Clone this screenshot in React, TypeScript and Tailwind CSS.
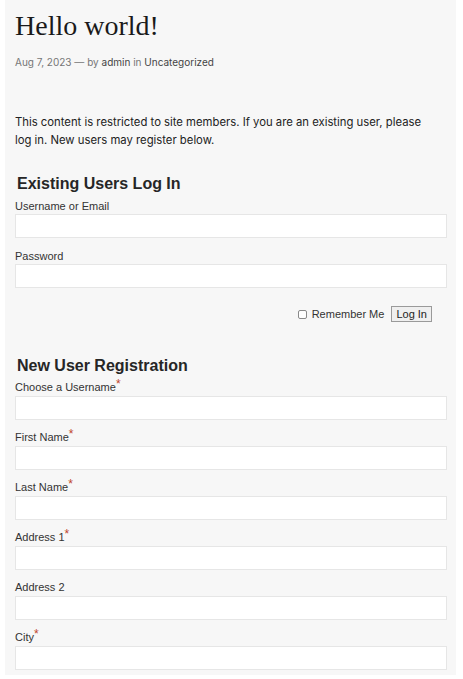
export default function App() {
  const fields: { label: string; required: boolean }[] = [
    { label: 'Choose a Username', required: true },
    { label: 'First Name', required: true },
    { label: 'Last Name', required: true },
    { label: 'Address 1', required: true },
    { label: 'Address 2', required: false },
    { label: 'City', required: true },
  ]

  return (
    <div className="min-h-screen bg-white">
      {/* Post panel */}
      <div className="mx-[5px] w-[451px] bg-[#f7f7f7] pl-[10px] pr-[9px] pb-[5px]">
        <h1
          className="pt-[9px] text-[28px] leading-[34px] text-[#1a1a1a]"
          style={{ fontFamily: '"Liberation Serif", serif' }}
        >
          Hello world!
        </h1>
        <p
          className="mt-[12px] text-[10px] leading-[14px] text-[#767676]"
          style={{ fontFamily: 'Inter, sans-serif' }}
        >
          Aug 7, 2023 — by <span className="text-[#444]">admin</span> in{' '}
          <span className="text-[#444]">Uncategorized</span>
        </p>

        <p
          className="mt-[44px] max-w-[416px] text-[11.3px] leading-[18px] text-[#222]"
          style={{ fontFamily: 'Inter, sans-serif' }}
        >
          This content is restricted to site members. If you are an existing user, please log in. New users may register
          below.
        </p>

        <div style={{ fontFamily: '"Liberation Sans", Arial, sans-serif' }}>
          {/* Login */}
          <h2 className="mt-[25px] pl-[2px] text-[16px] font-bold leading-[20px] text-[#262626]">
            Existing Users Log In
          </h2>
          <div className="mt-[5px] flex flex-col gap-[11px]">
            <div>
              <label className="mb-[1px] block text-[11px] leading-[14px] text-[#333]">Username or Email</label>
              <input className="block h-[24px] w-full border border-[#e6e6e6] bg-white" />
            </div>
            <div>
              <label className="mb-[1px] block text-[11px] leading-[14px] text-[#333]">Password</label>
              <input type="password" className="block h-[24px] w-full border border-[#e6e6e6] bg-white" />
            </div>
          </div>
          <div className="mt-[18px] flex items-center justify-end pr-[15px]">
            <span className="h-[9px] w-[9px] rounded-[2px] border border-[#8a8a8a] bg-white" />
            <span className="ml-[5px] text-[11px] leading-[14px] text-[#333]">Remember Me</span>
            <button className="ml-[7px] h-[16px] border border-[#9a9a9a] bg-[#efefef] px-[4px] text-[11px] leading-[14px] text-[#222]">
              Log In
            </button>
          </div>

          {/* Registration */}
          <h2 className="mt-[34px] pl-[2px] text-[16px] font-bold leading-[20px] text-[#262626]">
            New User Registration
          </h2>
          <div className="mt-[4px] flex flex-col gap-[10px]">
            {fields.map((f) => (
              <div key={f.label}>
                <label className="mb-[2px] block text-[11px] leading-[14px] text-[#333]">
                  {f.label}
                  {f.required && (
                    <span className="inline-block align-top text-[12px] leading-[8px] text-[#c0452b]">*</span>
                  )}
                </label>
                <input className="block h-[24px] w-full border border-[#e6e6e6] bg-white" />
              </div>
            ))}
          </div>
        </div>
      </div>
    </div>
  )
}
